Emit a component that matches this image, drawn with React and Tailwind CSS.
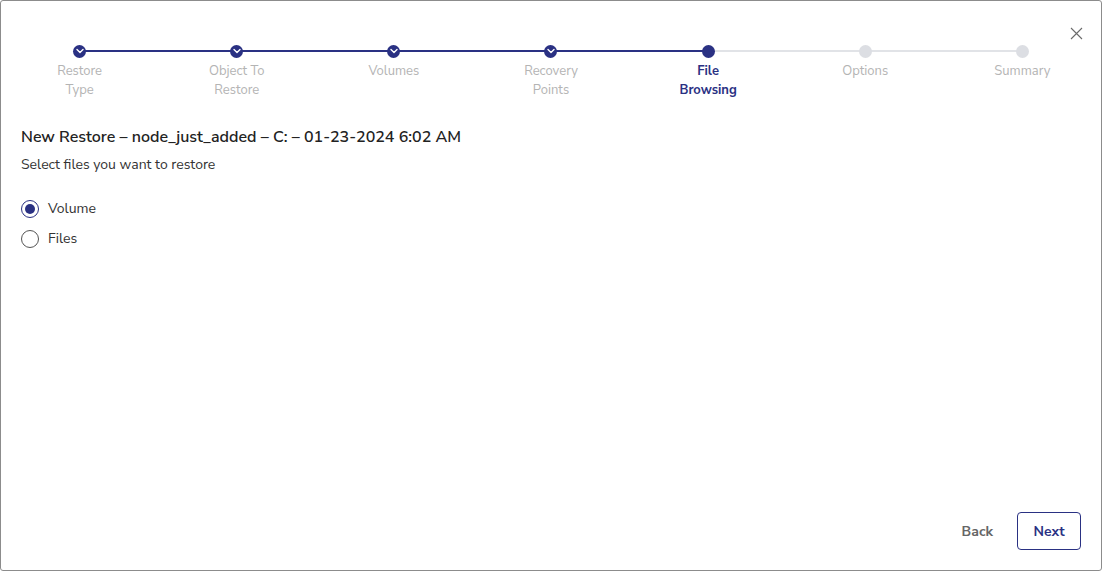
import React from "react";

const steps = [
  ["Restore", "Type"],
  ["Object To", "Restore"],
  ["Volumes"],
  ["Recovery", "Points"],
  ["File", "Browsing"],
  ["Options"],
  ["Summary"],
];
const ACTIVE = 4;

function Check() {
  return (
    <svg width="8" height="6" viewBox="0 0 8 6" fill="none">
      <path d="M1 1.5 L4 4.5 L7 1.5" stroke="white" strokeWidth="1.4" strokeLinecap="round" strokeLinejoin="round" />
    </svg>
  );
}

export default function App() {
  return (
    <div
      className="w-[1102px] h-[571px] bg-white border border-[#8c8c8c] rounded-[3px] relative flex flex-col overflow-hidden"
      style={{ fontFamily: '"Nunito Sans", Lato, "Open Sans", sans-serif' }}
    >
      <button className="absolute right-[18px] top-[26px] text-[#777]">
        <svg width="13" height="13" viewBox="0 0 13 13">
          <path d="M1 1 L12 12 M12 1 L1 12" stroke="#6b6b6b" strokeWidth="1.1" />
        </svg>
      </button>

      <div className="flex pt-[43px]">
        {steps.map((label, i) => {
          const done = i < ACTIVE;
          const active = i === ACTIVE;
          const leftColor = i <= ACTIVE ? "bg-[#2a3183]" : "bg-[#e1e3e7]";
          const rightColor = i < ACTIVE ? "bg-[#2a3183]" : "bg-[#e1e3e7]";
          return (
            <div key={i} className="flex-1 flex flex-col items-center">
              <div className="relative w-full h-[14px] flex items-center justify-center">
                {i > 0 && <div className={`absolute left-0 right-1/2 top-[6px] h-[2px] ${leftColor}`} />}
                {i < steps.length - 1 && <div className={`absolute left-1/2 right-0 top-[6px] h-[2px] ${rightColor}`} />}
                <div
                  className={`relative z-10 w-[13px] h-[13px] rounded-full flex items-center justify-center ${
                    done || active ? "bg-[#2a3183]" : "bg-[#dcdee3]"
                  }`}
                >
                  {done && <Check />}
                </div>
              </div>
              <div
                className={`mt-[4px] text-[13px] leading-[19px] text-center ${
                  active ? "text-[#2a3183] font-bold" : "text-[#b4b4b4]"
                }`}
              >
                {label.map((l, j) => (
                  <div key={j}>{l}</div>
                ))}
              </div>
            </div>
          );
        })}
      </div>

      <div className="px-[20px] pt-[26px]">
        <div className="text-[16px] font-semibold text-[#222] leading-[22px]">
          New Restore – node_just_added – C: – 01-23-2024 6:02 AM
        </div>
        <div className="mt-[8px] text-[14px] text-[#333] leading-[18px]">Select files you want to restore</div>
        <div className="mt-[26px] flex flex-col gap-[12px]">
          <label className="flex items-center gap-[9px] text-[14px] text-[#333] leading-[18px]">
            <span className="w-[18px] h-[18px] rounded-full border border-[#2a3183] flex items-center justify-center">
              <span className="w-[10px] h-[10px] rounded-full bg-[#2a3183]" />
            </span>
            Volume
          </label>
          <label className="flex items-center gap-[9px] text-[14px] text-[#333] leading-[18px]">
            <span className="w-[18px] h-[18px] rounded-full border border-[#555]" />
            Files
          </label>
        </div>
      </div>

      <div className="mt-auto flex justify-end items-center gap-[24px] pr-[20px] pb-[20px]">
        <button className="text-[14px] font-bold text-[#666]">Back</button>
        <button className="w-[64px] h-[38px] border border-[#2a3183] rounded-[4px] text-[14px] font-bold text-[#2a3183]">
          Next
        </button>
      </div>
    </div>
  );
}
